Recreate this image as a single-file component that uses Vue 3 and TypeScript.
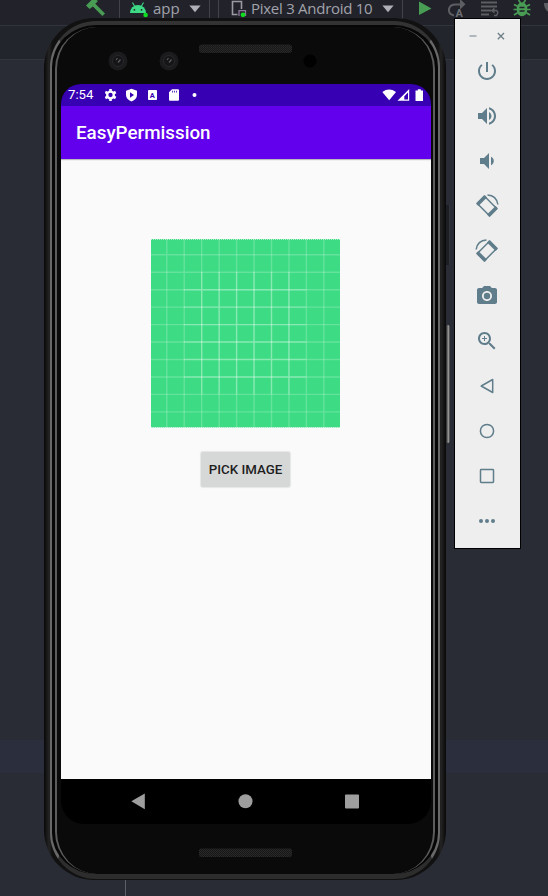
<script setup lang="ts">
interface Tool {
  name: string
  fill?: string
  stroke?: string
  width?: number
}

const tools: Tool[] = [
  { name: 'Power', fill: 'M13 3h-2v10h2V3zm4.83 2.17l-1.42 1.42C17.99 7.86 19 9.81 19 12c0 3.87-3.13 7-7 7s-7-3.13-7-7c0-2.19 1.01-4.14 2.58-5.42L6.17 5.17C4.23 6.82 3 9.26 3 12c0 4.97 4.03 9 9 9s9-4.03 9-9c0-2.74-1.23-5.18-3.17-6.83z' },
  { name: 'Volume up', fill: 'M3 9v6h4l5 5V4L7 9H3zm13.5 3c0-1.77-1.02-3.29-2.5-4.03v8.05c1.48-.73 2.5-2.25 2.5-4.02zM14 3.23v2.06c2.89.86 5 3.54 5 6.71s-2.11 5.85-5 6.71v2.06c4.01-.91 7-4.49 7-8.77s-2.99-7.86-7-8.77z', stroke: 'M14 4.3q6 2 6 7.700t-6 7.700', width: 1 },
  { name: 'Volume down', fill: 'M18.8 12c0-1.900-1.02-3.500-2.8-4.200v8.400c1.780-.7 2.8-2.300 2.8-4.200zM5 9v6h4l5 5V4L9 9H5z' },
  { name: 'Rotate left', fill: 'M1.600 8.800L8.800 1.600q.7-.7 1.400 0l1.800 1.800L3.400 12l-1.800-1.800q-.7-.7 0-1.400zM22.400 15.200l-7.200 7.200q-.7.7-1.400 0L12 20.600 20.600 12l1.800 1.800q.7.7 0 1.400z', stroke: 'M9.500 2.300L21.700 14.500 14.500 21.700 2.300 9.500z M12.500 1Q21.500 1.500 22.900 10.500', width: 1.5 },
  { name: 'Rotate right', fill: 'M22.400 8.800L15.200 1.600q-.7-.7-1.400 0L12 3.400 20.600 12l1.800-1.800q.7-.7 0-1.400zM1.600 15.200l7.200 7.200q.7.7 1.400 0l1.800-1.800L3.400 12l-1.800 1.800q-.7.7 0 1.400z', stroke: 'M14.500 2.300L2.300 14.500 9.500 21.700 21.700 9.500z M11.500 1Q2.500 1.500 1.100 10.500', width: 1.5 },
  { name: 'Screenshot', fill: 'M12 8.8a3.2 3.2 0 1 0 0 6.4 3.2 3.2 0 0 0 0-6.4zM9 2L7.17 4H4c-1.1 0-2 .9-2 2v12c0 1.1.9 2 2 2h16c1.1 0 2-.9 2-2V6c0-1.1-.9-2-2-2h-3.17L15 2H9zm3 15c-2.76 0-5-2.24-5-5s2.24-5 5-5 5 2.24 5 5-2.24 5-5 5z' },
  { name: 'Zoom', fill: 'M15.5 14h-.79l-.28-.27C15.41 12.59 16 11.11 16 9.5 16 5.91 13.09 3 9.5 3S3 5.91 3 9.5 5.91 16 9.5 16c1.61 0 3.09-.59 4.23-1.57l.27.28v.79l5 4.99L20.49 19l-4.99-5zm-6 0C7.01 14 5 11.99 5 9.5S7.01 5 9.5 5 14 7.01 14 9.5 11.99 14 9.5 14zM12 10h-2v2H9v-2H7V9h2V7h1v2h2v1z' },
  { name: 'Back', stroke: 'M6.2 12L17.7 5.5v13z', width: 1.5 },
  { name: 'Home', stroke: 'M18.6 12a6.6 6.6 0 1 1-13.2 0 6.6 6.6 0 0 1 13.2 0z', width: 1.5 },
  { name: 'Overview', stroke: 'M6.2 5.5h11.6q.7 0 .7.7v11.6q0 .7-.7.7H6.2q-.7 0-.7-.7V6.2q0-.7.7-.7z', width: 1.5 },
  { name: 'More', fill: 'M4 12a2 2 0 1 1 4 0 2 2 0 0 1-4 0zM10 12a2 2 0 1 1 4 0 2 2 0 0 1-4 0zM16 12a2 2 0 1 1 4 0 2 2 0 0 1-4 0z' },
]

const gridLines = Array.from({ length: 10 }, (_, i) => 15.8 + i * 17.45)
const innerLines = gridLines.slice(2, 8)
const cameras = [61, 112]
</script>

<template>
  <div class="desktop">
    <header class="toolbar">
      <svg class="hammer" width="22" height="18" viewBox="0 0 22 18">
        <path d="M1 5.5L8.5-2l4.5 3-2.7 2.8L20 13.4l-2.6 2.7L7.9 6.4 4.6 9z" fill="#499c54" />
      </svg>
      <div class="combo combo-app">
        <svg width="20" height="19" viewBox="0 0 20 19">
          <path d="M1 13a8 8 0 0 1 16 0z" fill="#3ddb85" />
          <path d="M3.5 2.5l2.3 4M14.5 2.5l-2.3 4" stroke="#3ddb85" stroke-width="1.1" />
          <circle cx="5.4" cy="9.8" r=".9" fill="#21222a" /><circle cx="12.6" cy="9.8" r=".9" fill="#21222a" />
          <circle cx="16.6" cy="15" r="2.3" fill="#10dc20" />
        </svg>
        <span class="combo-text">app</span>
        <svg class="caret" width="12" height="8" viewBox="0 0 12 8"><path d="M.4.5h11.2L6 7.2z" fill="#b0b1b8" /></svg>
      </div>
      <div class="combo combo-device">
        <svg width="18" height="19" viewBox="0 0 18 19">
          <path d="M6.500 14.500H1.500V1.500h9V9" fill="none" stroke="#9a9ba2" stroke-width="1.6" />
          <path d="M8 16V10.700h6.500V16" fill="none" stroke="#8c7798" stroke-width="1.3" />
          <circle cx="12" cy="14.800" r="2.4" fill="#10dc20" />
        </svg>
        <span class="combo-text device-text">Pixel 3 Android 10</span>
        <svg class="caret" width="12" height="8" viewBox="0 0 12 8"><path d="M.4.5h11.2L6 7.2z" fill="#b0b1b8" /></svg>
      </div>
      <svg class="actions" width="130" height="19" viewBox="0 0 130 19">
        <path d="M1 1.500L13.500 8.500 1 15z" fill="#499c54" />
        <g fill="none" stroke="#5d5e63" stroke-width="2">
          <path d="M36 15.500Q30 14 31 9T39 4.500H43" />
          <path d="M63 2.500H79M63 6.500H79M63 10.500H73M63 14.500H71" />
          <path d="M75 10.500h3.500q2.500 1.500 0 5H76" stroke-width="1.500" />
        </g>
        <path d="M42-1l5.500 5.200L42 9.500zM76.500 7.500v6l-4-3z" fill="#5d5e63" />
        <text x="37.500" y="17" font-family="Roboto, sans-serif" font-size="11" font-weight="700" fill="#6d6e73">A</text>
        <g stroke="#499c54" stroke-width="1.700" fill="none">
          <path d="M96 4.500l4 2M112 4.500l-4 2M95.500 9.500h17M96 15l4-2.500M112 15l-4-2.500M100.500 0l2 3M107.500 0l-2 3" />
        </g>
        <ellipse cx="104" cy="9.200" rx="5.300" ry="7" fill="#499c54" />
        <path d="M101.500 7.500h5M101.500 11h5" stroke="#21222a" stroke-width="1.300" />
        <path d="M126 3h6v10q-6-3-6-10z" fill="#5d5e63" />
      </svg>
    </header>
    <div class="nav-strip"></div>
    <main class="editor">
      <div class="caret-row"></div>
      <div class="split-line"></div>
    </main>

    <section class="phone">
      <i class="side-key power-key"></i>
      <i class="side-key volume-key"></i>
      <div class="shell">
        <div class="rim">
          <div class="face">
            <svg class="top-bezel" width="376" height="57" viewBox="0 0 376 57">
              <defs>
                <pattern id="mesh" width="2" height="2" patternUnits="userSpaceOnUse">
                  <rect width="2" height="2" fill="#171717" />
                  <rect width="1" height="1" fill="#2b2b2b" /><rect x="1" y="1" width="1" height="1" fill="#272727" />
                </pattern>
              </defs>
              <g v-for="x in cameras" :key="x">
                <circle :cx="x" cy="34" r="9.500" fill="#1b1b1e" />
                <circle :cx="x" cy="34" r="5.500" fill="#151517" stroke="#29292d" />
                <path :d="`M${x - 2} 33l1.500-2M${x} 35.500l2.500-3`" stroke="#5a5a60" stroke-width="1.200" />
              </g>
              <rect x="142" y="17.500" width="93" height="8.500" rx="3" fill="url(#mesh)" />
              <circle cx="253" cy="34" r="6.500" fill="#010101" />
            </svg>

            <div class="screen">
              <div class="status-bar">
                <span class="clock">7:54</span>
                <svg width="96" height="14" viewBox="0 0 96 14" fill="#fff">
                  <g transform="translate(5.500 7)">
                    <circle r="3.300" fill="none" stroke="#fff" stroke-width="2.300" />
                    <path d="M0-6v3M0 3v3M-5.200-3l2.600 1.500M2.600 1.500L5.200 3M-5.200 3l2.600-1.500M2.600-1.500L5.200-3" stroke="#fff" stroke-width="2.600" />
                  </g>
                  <path fill-rule="evenodd" d="M26.500.8l5.500 2v4q0 4.700-5.500 6.600Q21 11.500 21 6.800v-4zM25 4.300v5.400l4-2.700z" />
                  <rect x="43" y="2" width="9" height="10" rx=".8" />
                  <text x="44.800" y="9.800" font-family="Roboto, sans-serif" font-size="7.500" font-weight="700" fill="#3700b3">A</text>
                  <path fill-rule="evenodd" d="M67 1.200h6q1 0 1 1v9.600q0 1-1 1h-8q-1 0-1-1V4.300zM67.200 2.800v1.800h.8v-1.800zM69.200 2.800v1.800h.8v-1.800zM71.200 2.800v1.800h.8v-1.800z" />
                  <circle cx="89.500" cy="7" r="2" />
                </svg>
                <svg class="signals" width="44" height="14" viewBox="0 0 44 14" fill="#fff">
                  <path d="M.3 4Q7-.8 14 4L7.200 12.300z" />
                  <path fill-rule="evenodd" d="M27.200 1v11.800H15.500zM26 4.500l-3.700 3.700v3.400H26z" />
                  <path d="M35.800 1.200h3v1.200H41v10.500h-7.500V2.400h2.300z" />
                </svg>
              </div>
              <div class="app-bar">EasyPermission</div>
              <div class="content">
                <svg class="preview" width="189" height="189" viewBox="0 0 189 189">
                  <rect width="189" height="188.500" fill="#3ddc84" />
                  <g stroke="#fff" stroke-opacity=".2" stroke-width="1.400">
                    <path v-for="p in gridLines" :key="p" :d="`M${p} 0V189M0 ${p}H189`" />
                  </g>
                  <g stroke="#fff" stroke-opacity=".24" stroke-width="1.400">
                    <path v-for="p in innerLines" :key="p" :d="`M${p} 33V155M33 ${p}H155`" />
                  </g>
                  <path d="M0 .5H189M0 188.500H189" stroke="#dff5e8" stroke-dasharray="1 1" stroke-opacity=".7" />
                </svg>
                <button class="pick" type="button">PICK IMAGE</button>
              </div>
              <nav class="nav-bar">
                <svg width="370" height="46" viewBox="0 0 370 46" fill="#9e9e9e">
                  <path d="M70.300 22.300L83.800 14.500v15.700z" />
                  <circle cx="184.500" cy="22.300" r="7" />
                  <rect x="284" y="15.500" width="14" height="14" rx="1" />
                </svg>
              </nav>
            </div>

            <svg class="bottom-bezel" width="376" height="50" viewBox="0 0 376 50">
              <rect x="142" y="24.500" width="93" height="8.500" rx="2" fill="url(#mesh)" />
            </svg>
          </div>
        </div>
      </div>
    </section>

    <aside class="emulator">
      <div class="window-keys">
        <svg width="66" height="29" viewBox="0 0 66 29" fill="none">
          <path d="M14.500 17h7" stroke="#9aa4a9" stroke-width="1.500" />
          <path d="M42.800 14l6.200 6.200M49 14l-6.200 6.200" stroke="#6d7e87" stroke-width="1.300" />
        </svg>
      </div>
      <div v-for="tool in tools" :key="tool.name" class="tool">
        <svg width="24" height="24" viewBox="0 0 24 24">
          <path v-if="tool.fill" :d="tool.fill" fill="#607d8b" />
          <path v-if="tool.stroke" :d="tool.stroke" fill="none" stroke="#607d8b" :stroke-width="tool.width" stroke-linejoin="round" />
        </svg>
      </div>
    </aside>
  </div>
</template>

<style scoped>
.desktop {
  position: relative;
  display: flex;
  flex-direction: column;
  width: 548px;
  height: 896px;
  overflow: hidden;
  background: #292b35;
  font-family: Roboto, 'Liberation Sans', sans-serif;
}
.desktop * { box-sizing: border-box; }
svg { display: block; flex: none; }
.toolbar {
  display: flex;
  height: 26px;
  flex: none;
  background: #21222a;
  border-bottom: 1px solid #32343d;
}
.hammer { margin-left: 85px; }
.combo {
  display: flex;
  align-items: flex-start;
  height: 19px;
  border: 1px solid #42434a;
  border-top: 0;
}
.combo-app { width: 91px; margin-left: 12px; padding-left: 9px; }
.combo-app .combo-text { margin-left: 4px; }
.combo-device { width: 185px; margin-left: 8px; padding-left: 12px; }
.combo-device .combo-text { margin-left: 2px; }
.combo-text {
  font: 15px/17px 'Open Sans', 'Noto Sans', sans-serif;
  color: #a2a3ab;
  white-space: nowrap;
}
.device-text { letter-spacing: -0.27px; }
.caret { margin: 5px 8px 0 auto; }
.actions { margin-left: 15px; }
.nav-strip { height: 34px; flex: none; background: #22252c; border-bottom: 1px solid #32343e; }
.editor { display: flex; flex-direction: column; flex: 1; padding-top: 680px; }
.caret-row { height: 33px; background: #2b2e3c; }
.split-line { width: 1px; flex: 1; margin-left: 125px; background: #5c5e68; }

.phone { position: absolute; left: 44px; top: 18px; width: 402px; height: 862px; }
.side-key { position: absolute; right: -4px; width: 5px; background: #1d1e24; border-right: 1px solid #32343b; }
.power-key { top: 187px; height: 60px; }
.volume-key { top: 307px; height: 118px; width: 4px; border-radius: 2px; background: linear-gradient(90deg, #222, #999 60%, #333); border: 0; }
.shell {
  position: relative;
  height: 862px;
  padding: 3px 6px 1px;
  border-radius: 50px;
  background: linear-gradient(90deg, #080808 0, #242424 5px, #111 8px, #111 394px, #242424 397px, #080808 402px);
}
.rim {
  height: 858px;
  padding: 2px 3px 0;
  border: solid;
  border-width: 4px 2px 5px;
  border-color: #333 #686868 #2d2d2d;
  border-radius: 46px;
  background: #060606;
}
.face {
  height: 847px;
  border: solid #5c5c5c;
  border-width: 0 2px;
  border-radius: 42px;
  background: #0a0a0a;
}
.screen {
  display: flex;
  flex-direction: column;
  width: 370px;
  height: 740px;
  margin-left: 4px;
  overflow: hidden;
  border-radius: 20px 20px 23px 23px;
  background: #000;
}
.status-bar { display: flex; align-items: center; height: 22px; flex: none; padding: 0 5px 0 7px; background: #3700b3; }
.clock { width: 37px; color: #fff; font-size: 13.2px; line-height: 22px; }
.signals { margin-left: auto; }
.app-bar {
  z-index: 1;
  height: 52.5px;
  flex: none;
  padding-left: 15px;
  background: #6200ee;
  color: #fff;
  font-size: 18.8px;
  font-weight: 500;
  line-height: 54px;
  box-shadow: 0 1px 1px #bbb;
}
.content { display: flex; flex-direction: column; align-items: center; height: 620px; flex: none; padding-top: 80px; background: #fafafa; }
.preview { margin-right: 1px; }
.pick {
  width: 89px;
  height: 35px;
  margin-top: 24px;
  margin-right: 1px;
  padding: 0;
  border: 0;
  border-radius: 2px;
  background: #d6d7d7;
  box-shadow: 0 0 1px 1px #e6e6e6;
  color: #1e1e1e;
  font: 500 13.3px/35px Roboto, sans-serif;
  white-space: nowrap;
}

.emulator {
  position: absolute;
  left: 454px;
  top: 18px;
  width: 67px;
  height: 531px;
  border: 1px solid #000;
  background: #eee;
}
.window-keys { height: 29px; }
.tool { display: flex; align-items: center; justify-content: center; height: 45px; padding-right: 1px; }
</style>

<style>
body { background: #292b35; }
</style>
